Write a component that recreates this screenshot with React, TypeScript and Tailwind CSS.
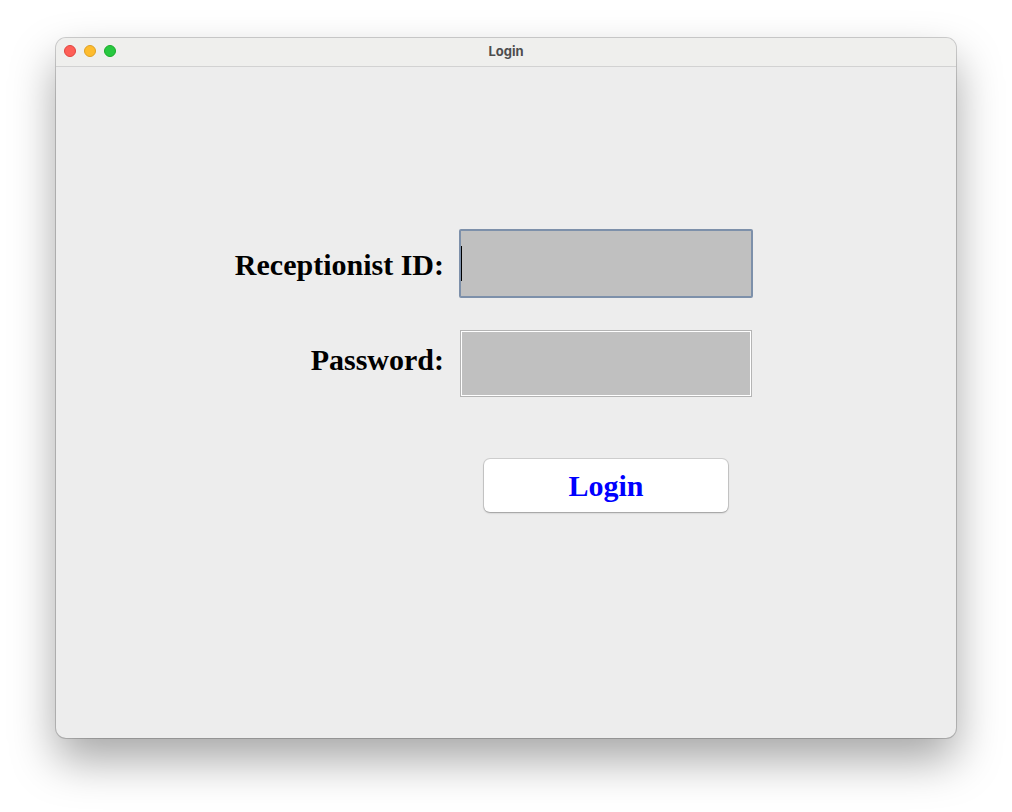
export default function App() {
  return (
    <div className="min-h-[812px] w-[1012px] bg-white pt-[38px] pl-[56px]">
      <div className="w-[900px] h-[700px] rounded-[10px] bg-[#ededed] shadow-[0_0_0_1px_rgba(0,0,0,0.18),0_22px_45px_rgba(0,0,0,0.35)] overflow-hidden flex flex-col">
        {/* title bar */}
        <div className="relative h-[29px] shrink-0 bg-[#efefed] border-b border-[#d2d2d2] flex items-center justify-center">
          <div className="absolute left-[8px] top-[7px] flex gap-[8px]">
            <span className="w-[12px] h-[12px] rounded-full bg-[#fe5f57] border border-[#e0443e]" />
            <span className="w-[12px] h-[12px] rounded-full bg-[#febc2e] border border-[#dea123]" />
            <span className="w-[12px] h-[12px] rounded-full bg-[#28c840] border border-[#1aab29]" />
          </div>
          <span className="text-[13px] font-bold text-[#4d4d4d] font-['Inter','Liberation_Sans',sans-serif]">Login</span>
        </div>

        {/* form */}
        <div className="flex-1 pt-[162px] font-['Liberation_Serif',serif]">
          <div className="flex items-center h-[69px]">
            <div className="w-[388px] text-right text-[30px] font-bold text-black pt-[1px]">Receptionist ID:</div>
            <div className="ml-[15px] relative w-[294px] h-[69px] bg-[#c0c0c0] border-2 border-[#7d90aa] rounded-[2px]">
              <span className="absolute left-[0px] top-[15px] w-[1px] h-[35px] bg-black" />
            </div>
          </div>
          <div className="flex items-center h-[67px] mt-[32px]">
            <div className="w-[388px] text-right text-[30px] font-bold text-black pb-[8px]">Password:</div>
            <div className="ml-[16px] w-[292px] h-[67px] bg-[#c0c0c0] border border-[#b4b4b4] shadow-[inset_0_0_0_1px_#ffffff]" />
          </div>
          <div className="mt-[62px] ml-[428px]">
            <button className="w-[244px] h-[53px] bg-white rounded-[6px] shadow-[0_0_0_1px_rgba(0,0,0,0.12),0_1px_2px_rgba(0,0,0,0.25)] text-[30px] font-bold text-[#0000ff]">
              Login
            </button>
          </div>
        </div>
      </div>
    </div>
  )
}
